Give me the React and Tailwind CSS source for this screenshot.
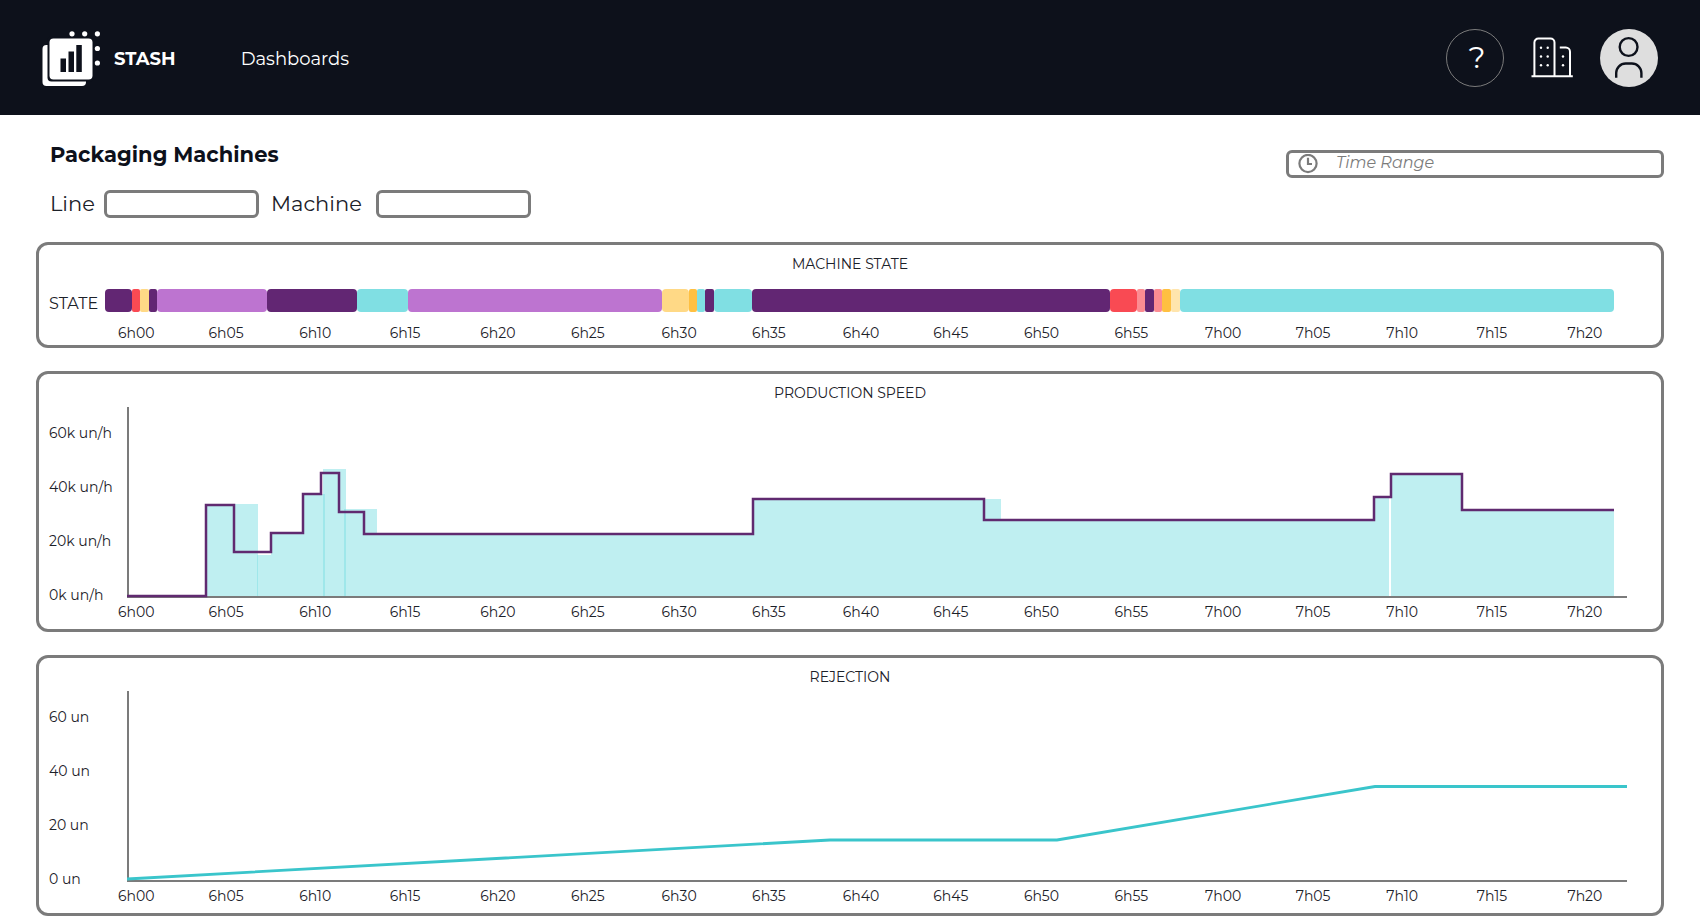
import { useState } from 'react'

const TIMES = [
  '6h00', '6h05', '6h10', '6h15', '6h20', '6h25', '6h30', '6h35', '6h40',
  '6h45', '6h50', '6h55', '7h00', '7h05', '7h10', '7h15', '7h20',
]

const STATES = [
  { color: 'bg-[#622673]', size: 27 },
  { color: 'bg-[#f94a53]', size: 8 },
  { color: 'bg-[#ffd986]', size: 9 },
  { color: 'bg-[#622673]', size: 8 },
  { color: 'bg-[#bd74d0]', size: 110 },
  { color: 'bg-[#622673]', size: 90 },
  { color: 'bg-[#80dfe3]', size: 51 },
  { color: 'bg-[#bd74d0]', size: 254 },
  { color: 'bg-[#ffd986]', size: 27 },
  { color: 'bg-[#ffc041]', size: 8 },
  { color: 'bg-[#80dfe3]', size: 8 },
  { color: 'bg-[#622673]', size: 9 },
  { color: 'bg-[#80dfe3]', size: 38 },
  { color: 'bg-[#622673]', size: 358 },
  { color: 'bg-[#f94a53]', size: 27 },
  { color: 'bg-[#fc8c92]', size: 8 },
  { color: 'bg-[#622673]', size: 9 },
  { color: 'bg-[#fc8c92]', size: 8 },
  { color: 'bg-[#ffc041]', size: 9 },
  { color: 'bg-[#ffe5ad]', size: 9 },
  { color: 'bg-[#80dfe3]', size: 434 },
]

// [x, width, top] of each block under the speed line
const SPEED_BLOCKS = [
  [79, 52, 97],
  [130, 14, 148],
  [144, 33, 127],
  [177, 21, 87],
  [196, 23, 62],
  [217, 33, 102],
  [250, 376, 127],
  [626, 248, 92],
  [874, 372, 113],
  [1246, 16, 91],
  [1264, 71, 67],
  [1335, 152, 104],
]

const SPEED_LINE =
  'M0 189H79V98H107V145H144V126H176V87H194V66H212V105H237V127H626V92H857V113H1247V90H1264V67H1335V103H1487'

const REJECTION_LINE = 'M0 188L703 149H930L1248 95.500H1500'

function Logo() {
  return (
    <svg width="58" height="56" viewBox="0 0 58 56" aria-hidden="true">
      <rect x="0.5" y="14" width="43.5" height="41" rx="4" fill="#fff" />
      <rect x="5.5" y="5.5" width="46" height="45" rx="4" fill="#0d111b" />
      <rect x="7.5" y="7.5" width="43" height="41" rx="4" fill="#fff" />
      <path d="M18.5 27.5h5.5v13.5h-5.5zM26.5 20.5h5.5v20.5h-5.5zM34.3 14h5.5v27h-5.5z" fill="#0d111b" />
      <g fill="#fff">
        <circle cx="30" cy="2.8" r="2.6" />
        <circle cx="42.7" cy="2.8" r="2.6" />
        <circle cx="55.4" cy="2.8" r="2.6" />
        <circle cx="55.4" cy="17.5" r="2.6" />
        <circle cx="55.4" cy="32" r="2.6" />
      </g>
    </svg>
  )
}

function BuildingIcon() {
  return (
    <svg width="42" height="42" viewBox="0 0 42 42" fill="none" stroke="#fff" strokeWidth="2" aria-hidden="true">
      <path d="M0.5 39.3H41.8" />
      <path d="M3.4 39V5.5a4 4 0 0 1 4-4H19.5a4 4 0 0 1 4 4V39" />
      <path d="M28.8 10.6H34.8a4.2 4.2 0 0 1 4.2 4.2V39" />
      <g fill="#fff" stroke="none">
        <circle cx="10" cy="10.7" r="1.2" />
        <circle cx="16.7" cy="10.7" r="1.2" />
        <circle cx="10" cy="19.5" r="1.2" />
        <circle cx="16.7" cy="19.5" r="1.2" />
        <circle cx="10" cy="28.2" r="1.2" />
        <circle cx="16.7" cy="28.2" r="1.2" />
        <circle cx="32" cy="19.5" r="1.2" />
        <circle cx="32" cy="28.2" r="1.2" />
      </g>
    </svg>
  )
}

function UserIcon() {
  return (
    <svg width="58" height="58" viewBox="0 0 58 58" fill="none" stroke="#0d111b" strokeWidth="2.4" aria-hidden="true">
      <circle cx="28.6" cy="18" r="8.9" />
      <path d="M16.2 48.8V44a9.5 9.5 0 0 1 9.5-9.5h6.2a9.5 9.5 0 0 1 9.5 9.5v4.8" />
    </svg>
  )
}

function ClockIcon() {
  return (
    <svg width="20" height="20" viewBox="0 0 20 20" fill="none" stroke="#7b7b7b" strokeWidth="2.2" aria-hidden="true">
      <circle cx="10" cy="9.5" r="8.6" />
      <path d="M10 3.8v6.2h4" />
    </svg>
  )
}

function Panel({ title, children }) {
  return (
    <section className="rounded-xl border-3 border-[#7b7b7b] pt-[9px]">
      <h2 className="text-center text-[14px] leading-5">{title}</h2>
      {children}
    </section>
  )
}

function TimeAxis() {
  return (
    <div className="grid grid-cols-[repeat(17,minmax(0,1fr))] pr-[3px] pl-[79px] text-[14px] leading-5">
      {TIMES.map((time) => (
        <span key={time}>{time}</span>
      ))}
    </div>
  )
}

function Chart({ labels, children }) {
  return (
    <div className="mt-1 pb-[7px]">
      <div className="mb-1 flex h-[191px] pr-[34px] pl-[10px]">
        <div className="flex w-[78px] shrink-0 flex-col gap-[34px] pt-4 text-[14px] leading-5 whitespace-nowrap">
          {labels.map((label) => (
            <span key={label}>{label}</span>
          ))}
        </div>
        <svg className="h-full min-w-0 flex-1" viewBox="0 0 1500 191" preserveAspectRatio="none">
          {children}
        </svg>
      </div>
      <TimeAxis />
    </div>
  )
}

function Axes() {
  return (
    <path d="M1 0V190H1500" fill="none" stroke="#7b7b7b" strokeWidth="2" vectorEffect="non-scaling-stroke" />
  )
}

export default function App() {
  const [line, setLine] = useState('')
  const [machine, setMachine] = useState('')
  const [range, setRange] = useState('')

  return (
    <div className="min-h-screen bg-white font-['Montserrat','Inter',sans-serif] text-[#1c2129]">
      <header className="flex h-[115px] items-center bg-[#0d111b] px-[42px] text-white">
        <div className="flex items-center gap-[65px] pt-[3px] text-[18px]">
          <a href="#" className="flex items-center gap-[14px] font-bold">
            <Logo />
            STASH
          </a>
          <nav>
            <a href="#">Dashboards</a>
          </nav>
        </div>
        <div className="ml-auto flex items-center gap-[27px]">
          <button
            type="button"
            aria-label="Help"
            className="size-[58px] rounded-full border border-[#7b7b7b] pl-1 text-[30px]"
          >
            ?
          </button>
          <button type="button" aria-label="Company">
            <BuildingIcon />
          </button>
          <button type="button" aria-label="Account" className="size-[58px] rounded-full bg-[#dedede]">
            <UserIcon />
          </button>
        </div>
      </header>

      <main className="px-9 pt-[26px]">
        <div className="flex items-start justify-between pl-[14px]">
          <div>
            <h1 className="text-[21px] leading-7 font-bold text-[#0d111b]">Packaging Machines</h1>
            <div className="mt-[21px] flex items-center">
              <label htmlFor="line" className="w-[54px] text-[21px] leading-7">Line</label>
              <input
                id="line"
                value={line}
                onChange={(e) => setLine(e.target.value)}
                className="h-7 w-[155px] rounded-md border-3 border-[#7b7b7b] px-2"
              />
              <label htmlFor="machine" className="ml-3 w-[105px] text-[21px] leading-7">Machine</label>
              <input
                id="machine"
                value={machine}
                onChange={(e) => setMachine(e.target.value)}
                className="h-7 w-[155px] rounded-md border-3 border-[#7b7b7b] px-2"
              />
            </div>
          </div>
          <div className="mt-[9px] flex h-7 w-[378px] items-center rounded-md border-3 border-[#7b7b7b] pl-[9px]">
            <ClockIcon />
            <input
              aria-label="Time Range"
              placeholder="Time Range"
              value={range}
              onChange={(e) => setRange(e.target.value)}
              className="ml-[18px] min-w-0 flex-1 pb-[2px] text-[16px] leading-5 italic outline-none placeholder:text-[#7b7b7b]"
            />
          </div>
        </div>

        <div className="mt-6 flex flex-col gap-[23px]">
          <Panel title="MACHINE STATE">
            <div className="mt-[15px] flex items-start pr-[47px] pl-[10px]">
              <span className="w-[56px] shrink-0 text-[16px] leading-[30px]">STATE</span>
              <div className="flex h-[23px] flex-1">
                {STATES.map((state, i) => (
                  <div
                    key={i}
                    className={`${state.color} ${state.size > 10 ? 'rounded-sm' : 'rounded-[2px]'}`}
                    style={{ flex: `${state.size} 1 0` }}
                  />
                ))}
              </div>
            </div>
            <div className="mt-1 pb-[2px]">
              <TimeAxis />
            </div>
          </Panel>

          <Panel title="PRODUCTION SPEED">
            <Chart labels={['60k un/h', '40k un/h', '20k un/h', '0k un/h']}>
              {SPEED_BLOCKS.map(([x, width, top]) => (
                <rect key={x} x={x} y={top} width={width} height={190 - top} fill="#80dfe3" fillOpacity="0.5" />
              ))}
              <Axes />
              <path d={SPEED_LINE} fill="none" stroke="#602a70" strokeWidth="2.5" vectorEffect="non-scaling-stroke" />
            </Chart>
          </Panel>

          <Panel title="REJECTION">
            <Chart labels={['60 un', '40 un', '20 un', '0 un']}>
              <Axes />
              <path d={REJECTION_LINE} fill="none" stroke="#3ac5cb" strokeWidth="2.8" vectorEffect="non-scaling-stroke" />
            </Chart>
          </Panel>
        </div>
      </main>
    </div>
  )
}
